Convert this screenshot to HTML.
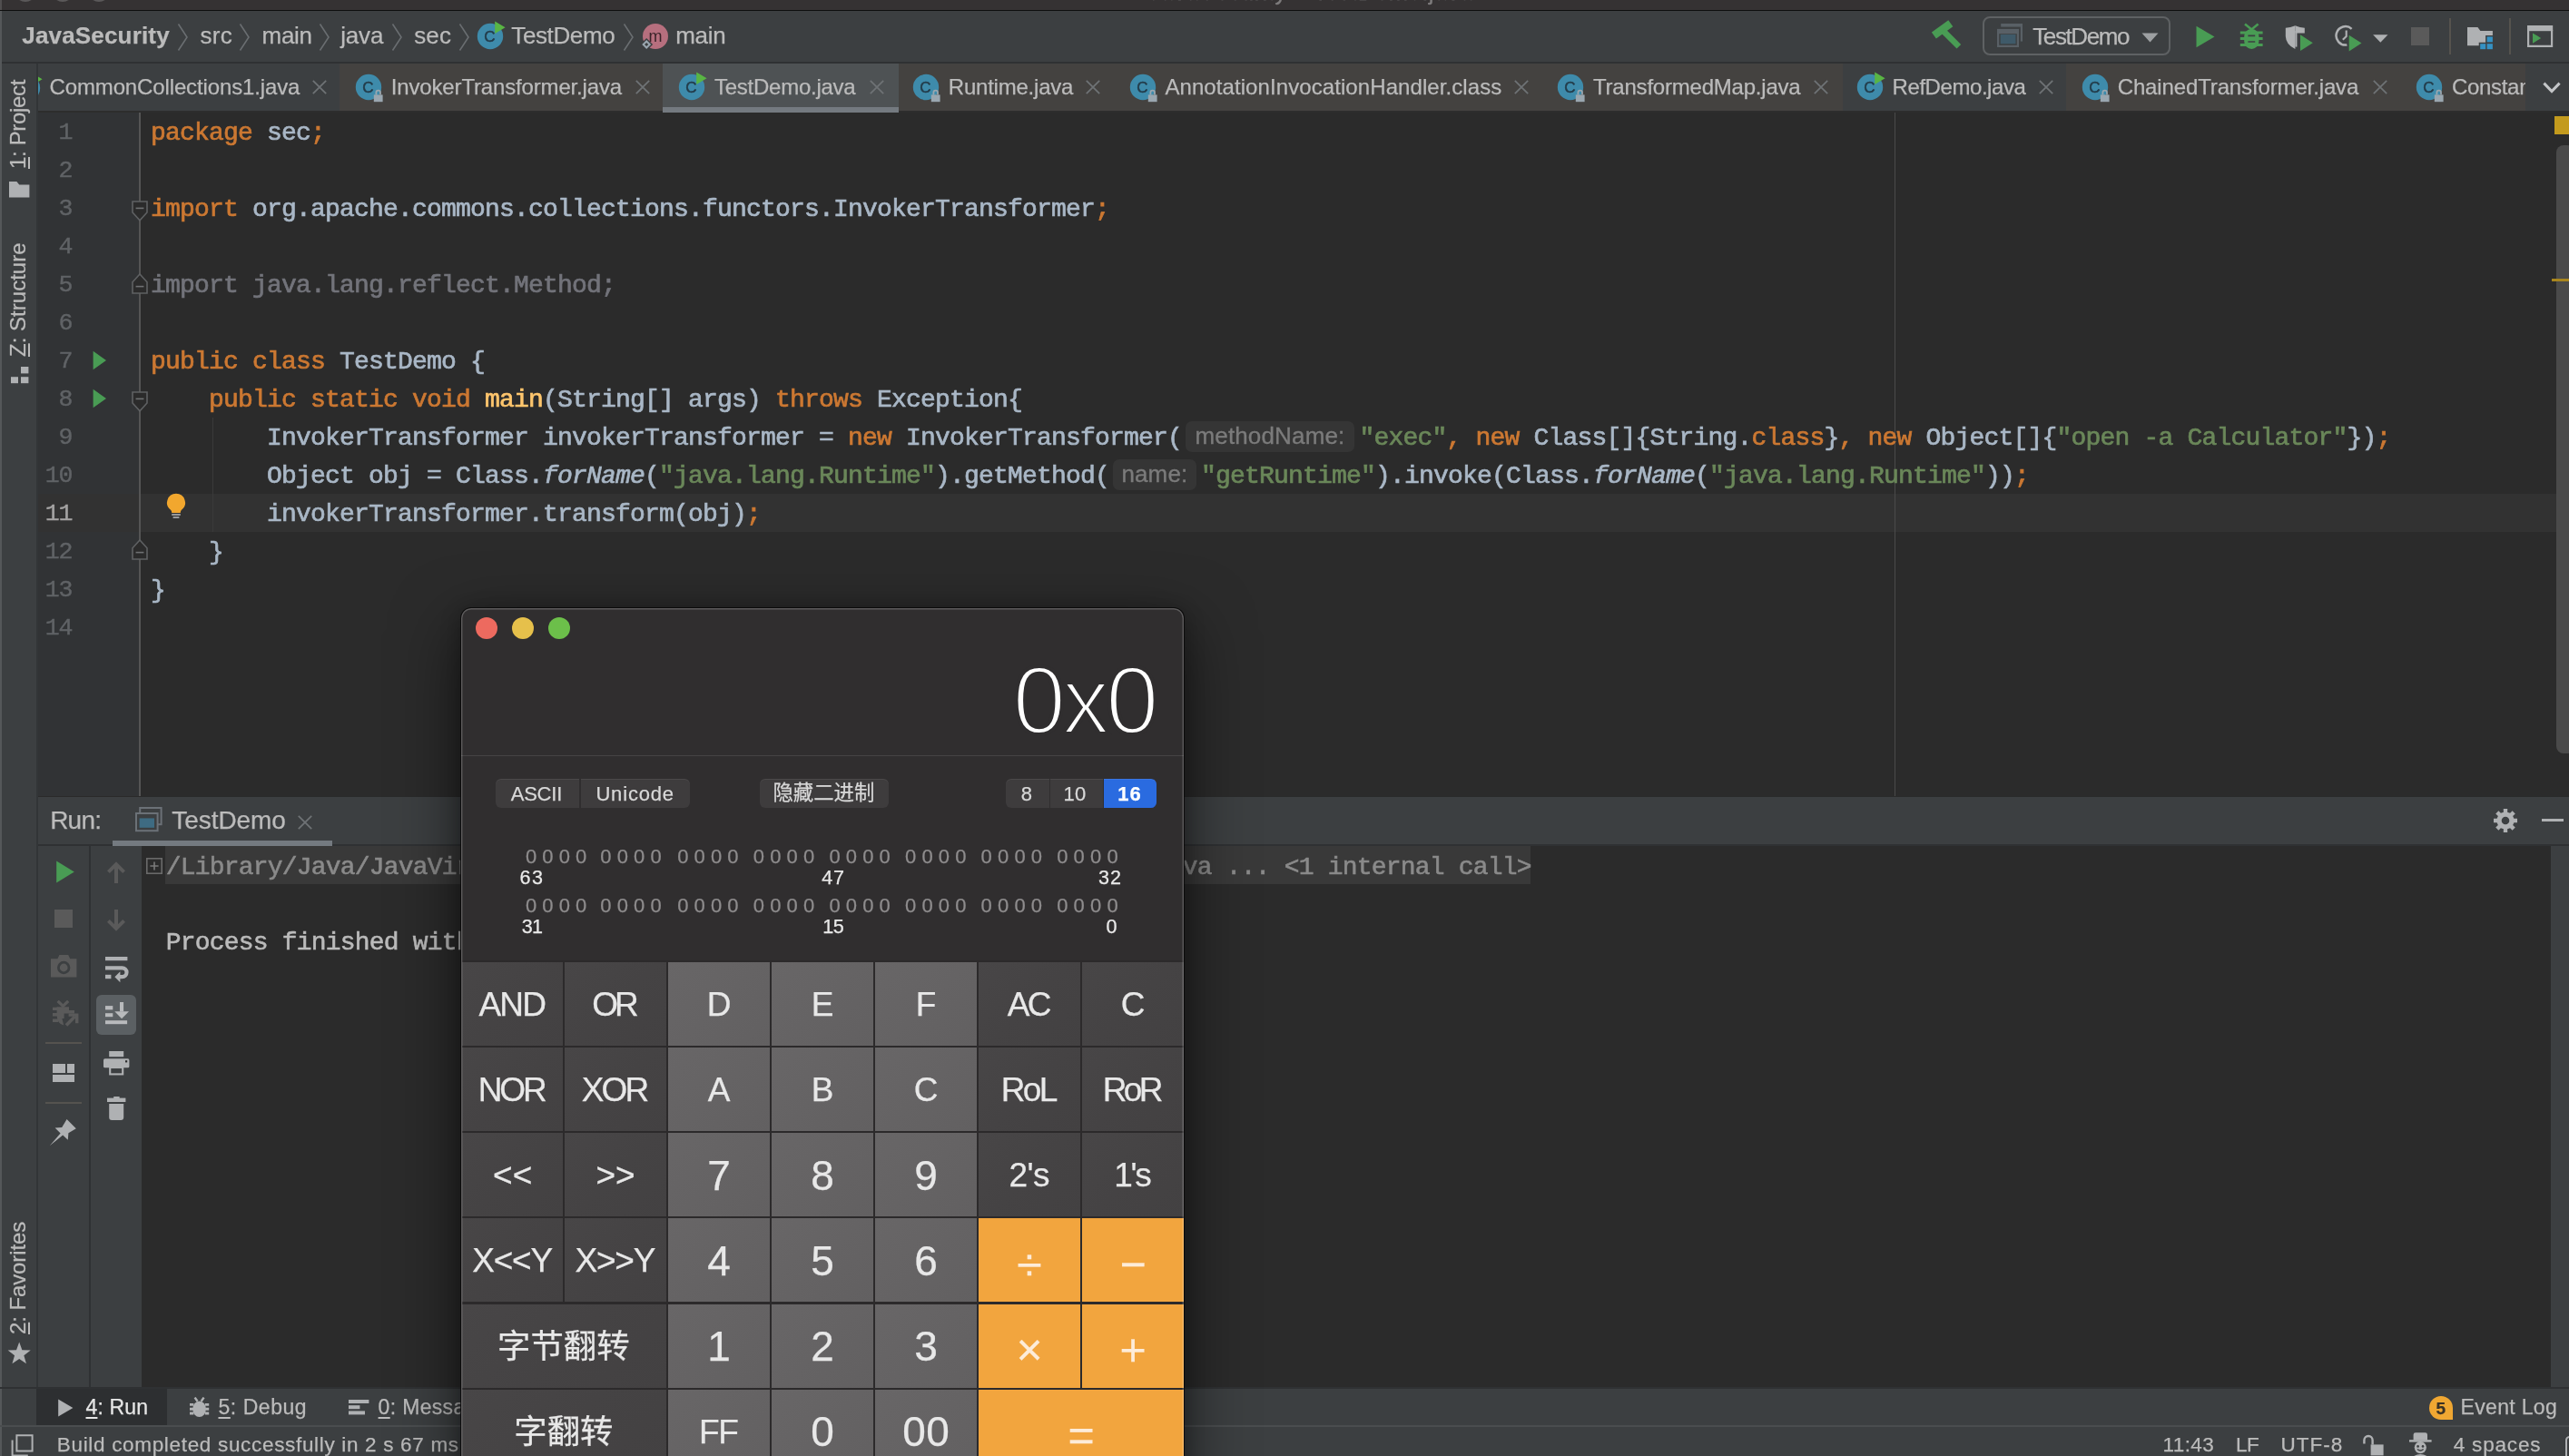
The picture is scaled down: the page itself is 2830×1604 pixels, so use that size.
<!DOCTYPE html>
<html lang="en"><head><meta charset="utf-8"><title>JavaSecurity – TestDemo.java</title>
<style>
html,body{margin:0;padding:0;background:#2b2b2b;}
body{width:2830px;height:1604px;overflow:hidden;position:relative;will-change:transform;font-family:"Liberation Sans",sans-serif;}
.b{position:absolute;display:block;}
.t{position:absolute;white-space:pre;line-height:1;display:block;-webkit-text-stroke:0.25px;}
.mo{font-family:"Liberation Mono",monospace;}
.cl{position:absolute;left:166px;height:42px;line-height:42px;white-space:pre;font-family:"Liberation Mono",monospace;font-size:28px;letter-spacing:-0.803px;color:#a9b7c6;-webkit-text-stroke:0.7px;}
.k{color:#cc7832}.s{color:#6a8759}.m{color:#ffc66d}.g{color:#72737a}.i{font-style:italic}
.hint{display:inline-block;vertical-align:top;height:34px;margin-top:2px;border-radius:7px;background:#353535;color:#7b7b7b;font-family:"Liberation Sans",sans-serif;font-size:26px;line-height:32px;text-align:center;letter-spacing:0.15px;-webkit-text-stroke:0.35px;}
.ln{position:absolute;width:40px;text-align:right;height:42px;line-height:42px;font-family:"Liberation Mono",monospace;font-size:26.6px;letter-spacing:-1.36px;color:#606366;white-space:pre;-webkit-text-stroke:0.4px;}

.cj{font-family:"Liberation Sans","Noto Sans CJK SC",sans-serif;}
#calc{position:absolute;left:508px;top:670px;width:795.8px;height:960px;background:#302e2f;border-radius:11px 11px 0 0;box-shadow:0 0 0 1px rgba(8,8,8,0.85),0 24px 70px 4px rgba(0,0,0,0.5),0 4px 22px rgba(0,0,0,0.3);overflow:hidden;}
#calc:after{content:"";position:absolute;left:0;top:0;right:0;bottom:0;border-radius:11px 11px 0 0;box-shadow:inset 0 0 0 1.4px rgba(255,255,255,0.22);pointer-events:none;}
.key{position:absolute;}
.kl{position:absolute;white-space:pre;line-height:1;text-align:center;color:#e8e8e8;}
</style></head>
<body>
<!-- sec_base -->
<div class="b" style="left:0px;top:0px;width:2830px;height:11px;background:#353233;"></div>
<div class="b" style="left:16px;top:-22.2px;width:24px;height:24px;border-radius:12px;background:#5b595a"></div>
<div class="b" style="left:56.5px;top:-22.2px;width:24px;height:24px;border-radius:12px;background:#5b595a"></div>
<div class="b" style="left:97px;top:-22.2px;width:24px;height:24px;border-radius:12px;background:#5b595a"></div>
<span class="t" style="left:1265.00px;top:-22.41px;font-size:26px;color:#7d7b7c;letter-spacing:0.300px;">JavaSecurity – TestDemo.java</span>
<div class="b" style="left:0px;top:11px;width:2830px;height:1px;background:#0e0e0e;"></div>
<div class="b" style="left:0px;top:12px;width:2830px;height:56px;background:#3c3f41;"></div>
<div class="b" style="left:0px;top:68px;width:2830px;height:2px;background:#2f3133;"></div>
<div class="b" style="left:0px;top:70px;width:40px;height:1458px;background:#3c3f41;"></div>
<div class="b" style="left:0px;top:12px;width:2px;height:1592px;background:#55585a;"></div>
<div class="b" style="left:0px;top:0px;width:2px;height:11px;background:#504e4f;"></div>
<div class="b" style="left:40px;top:70px;width:1.5px;height:1458px;background:#323537;"></div>
<div class="b" style="left:41.5px;top:70px;width:2788.5px;height:52px;background:#3c3f41;"></div>
<div class="b" style="left:41.5px;top:122px;width:2788.5px;height:2px;background:#2d2d2d;"></div>
<div class="b" style="left:41.5px;top:124px;width:111.5px;height:753px;background:#313335;"></div>
<div class="b" style="left:153px;top:124px;width:2px;height:753px;background:#555555;"></div>
<div class="b" style="left:155px;top:124px;width:2675px;height:753px;background:#2b2b2b;"></div>
<!-- sec_nav -->
<span class="t" style="left:24.30px;top:26.29px;font-size:26px;color:#bbbbbb;font-weight:700;letter-spacing:0.171px;">JavaSecurity</span>
<svg class="b" style="left:194.6px;top:25px;" width="13" height="32" viewBox="0 0 13 32"><polyline points="1.5,1.5 11,16 1.5,30.5" fill="none" stroke="#6a6e71" stroke-width="1.6"/></svg>
<span class="t" style="left:220.50px;top:26.29px;font-size:26px;color:#bbbbbb;letter-spacing:0.281px;">src</span>
<svg class="b" style="left:262.7px;top:25px;" width="13" height="32" viewBox="0 0 13 32"><polyline points="1.5,1.5 11,16 1.5,30.5" fill="none" stroke="#6a6e71" stroke-width="1.6"/></svg>
<span class="t" style="left:288.60px;top:26.29px;font-size:26px;color:#bbbbbb;letter-spacing:-0.339px;">main</span>
<svg class="b" style="left:350.9px;top:25px;" width="13" height="32" viewBox="0 0 13 32"><polyline points="1.5,1.5 11,16 1.5,30.5" fill="none" stroke="#6a6e71" stroke-width="1.6"/></svg>
<span class="t" style="left:375.20px;top:26.29px;font-size:26px;color:#bbbbbb;letter-spacing:-0.174px;">java</span>
<svg class="b" style="left:430.7px;top:25px;" width="13" height="32" viewBox="0 0 13 32"><polyline points="1.5,1.5 11,16 1.5,30.5" fill="none" stroke="#6a6e71" stroke-width="1.6"/></svg>
<span class="t" style="left:456.20px;top:26.29px;font-size:26px;color:#bbbbbb;letter-spacing:0.180px;">sec</span>
<svg class="b" style="left:505px;top:25px;" width="13" height="32" viewBox="0 0 13 32"><polyline points="1.5,1.5 11,16 1.5,30.5" fill="none" stroke="#6a6e71" stroke-width="1.6"/></svg>
<svg class="b" style="left:520px;top:20px;" width="40" height="40" viewBox="0 0 40 40"><circle cx="20" cy="20" r="14.2" fill="#3e8bab"/><text x="19.5" y="26" text-anchor="middle" font-family="Liberation Sans, sans-serif" font-size="17" fill="#233c4a" stroke="#233c4a" stroke-width="0.5">C</text><path d="M25.2 3.6 L36.6 10.2 L25.2 17 Z" fill="#59b544"/></svg>
<span class="t" style="left:563.30px;top:26.29px;font-size:26px;color:#bbbbbb;letter-spacing:-0.380px;">TestDemo</span>
<svg class="b" style="left:686px;top:25px;" width="13" height="32" viewBox="0 0 13 32"><polyline points="1.5,1.5 11,16 1.5,30.5" fill="none" stroke="#6a6e71" stroke-width="1.6"/></svg>
<svg class="b" style="left:702px;top:20px;" width="40" height="40" viewBox="0 0 40 40"><circle cx="20" cy="20" r="14" fill="#b66f7e"/><text x="20" y="26.2" text-anchor="middle" font-family="Liberation Sans, sans-serif" font-size="18" fill="#3a2329">m</text><rect x="-4.2" y="-4.2" width="8.4" height="8.4" transform="translate(10.2 29) rotate(45)" fill="#9aa7b0" stroke="#3c3f41" stroke-width="1.4"/><rect x="-1.5" y="-1.5" width="3" height="3" transform="translate(10.2 29) rotate(45)" fill="#3c3f41"/></svg>
<span class="t" style="left:744.30px;top:26.29px;font-size:26px;color:#bbbbbb;letter-spacing:-0.339px;">main</span>
<svg class="b" style="left:2128px;top:22px;" width="36" height="36" viewBox="0 0 36 36"><rect x="-11.4" y="-4.3" width="22.8" height="8.6" transform="translate(11.6 10.4) rotate(-36)" fill="#499c54"/><rect x="-3.3" y="0" width="6.6" height="25" transform="translate(12.2 11.6) rotate(-45)" fill="#499c54"/></svg>
<div class="b" style="left:2184px;top:18px;width:207.4px;height:42.8px;background:transparent;border:2.2px solid #5e6163;border-radius:8px;box-sizing:border-box;"></div>
<svg class="b" style="left:2200px;top:26px;" width="28" height="26" viewBox="0 0 28 26"><rect x="4.2" y="0" width="23.8" height="3.6" fill="#596066"/><rect x="25.8" y="0" width="2.2" height="19.6" fill="#596066"/><rect x="0" y="5.9" width="24" height="20.1" fill="#596066"/><rect x="2.2" y="11.2" width="19.6" height="12.6" fill="#3c3f41"/><rect x="3.7" y="12" width="16.8" height="10.3" fill="#3f5a69"/></svg>
<span class="t" style="left:2239.20px;top:26.59px;font-size:26px;color:#bbbbbb;letter-spacing:-1.380px;">TestDemo</span>
<svg class="b" style="left:2358.5px;top:36px;" width="19" height="11" viewBox="0 0 19 11"><path d="M0.5 0.5 H18.5 L9.5 10.5 Z" fill="#9da0a2"/></svg>
<svg class="b" style="left:2419px;top:27.5px;" width="22" height="25" viewBox="0 0 22 25"><path d="M0.5 0.8 L20.5 12.5 L0.5 24.2 Z" fill="#499c54"/></svg>
<svg class="b" style="left:2466px;top:24px;" width="29" height="32" viewBox="0 0 29 32"><path d="M7 2.4 L14.3 8.4 L21.6 2.4" fill="none" stroke="#499c54" stroke-width="2.6"/><path d="M6.2 16 a8.1 8.1 0 0 1 16.2 0 V21.6 a8.1 8.4 0 0 1 -16.2 0 Z" fill="#499c54"/><path d="M1.8 12 H26.6 M1.8 18.6 H26.6 M1.8 25.4 H26.6" stroke="#499c54" stroke-width="3"/><path d="M10.4 15.3 H18.2 M10.4 22 H18.2" stroke="#3c3f41" stroke-width="1.7"/></svg>
<svg class="b" style="left:2516px;top:26px;" width="33" height="31" viewBox="0 0 33 31"><path d="M12.4 2.2 Q7 4.4 1.8 4.8 V14 Q2.2 23.4 12.4 28 Z" fill="#afb1b3"/><path d="M12.4 2.2 Q17.6 4.4 22.8 4.8 V10.6 H12.4 Z" fill="#afb1b3"/><rect x="12.4" y="8" width="2" height="17.6" fill="#afb1b3"/><path d="M18 12.3 L31.8 21.2 L18 30.1 Z" fill="#499c54"/></svg>
<svg class="b" style="left:2571.2px;top:25.6px;" width="33" height="32" viewBox="0 0 33 32"><path d="M19.6 5.8 A10.2 10.2 0 1 0 14.4 23.4" fill="none" stroke="#afb1b3" stroke-width="2.5"/><path d="M13.7 7.6 V14 L9.8 17.8" fill="none" stroke="#afb1b3" stroke-width="2.1"/><path d="M16.7 12.7 L30.5 21.6 L16.7 30.5 Z" fill="#499c54"/></svg>
<svg class="b" style="left:2613.8px;top:37.6px;" width="17" height="10" viewBox="0 0 17 10"><path d="M0.1 0.3 H16.5 L8.3 8.8 Z" fill="#afb1b3"/></svg>
<div class="b" style="left:2656px;top:30px;width:20px;height:20.2px;background:#5a5a5a;"></div>
<div class="b" style="left:2698.2px;top:20px;width:1.8px;height:40px;background:#56534e;"></div>
<svg class="b" style="left:2718px;top:30px;" width="29" height="25" viewBox="0 0 29 25"><path d="M0 0 H11.4 L14.4 3.9 H27.9 V8.9 H20.1 V16.7 H12.7 V20.2 H0 Z" fill="#afb1b3"/><rect x="21.6" y="10.4" width="6.3" height="6" fill="#3592c4"/><rect x="14.2" y="18.2" width="6" height="6" fill="#3592c4"/><rect x="21.6" y="18.2" width="6.3" height="6" fill="#3592c4"/></svg>
<div class="b" style="left:2764px;top:20px;width:1.8px;height:40px;background:#56534e;"></div>
<svg class="b" style="left:2784px;top:28px;" width="29" height="24.2" viewBox="0 0 29 24.2"><rect x="0" y="0" width="28.2" height="6.2" fill="#afb1b3"/><path d="M1.1 5 V22.9 H27.1 V5" fill="none" stroke="#afb1b3" stroke-width="2.2"/><path d="M6 8.4 L15.2 14.1 L6 19.8 Z" fill="#499c54"/></svg>
<!-- sec_tabs -->
<span class="t" style="left:54.50px;top:84.08px;font-size:24px;color:#bbbbbb;letter-spacing:-0.130px;">CommonCollections1.java</span>
<svg class="b" style="left:343.3px;top:87px;" width="18" height="18" viewBox="0 0 18 18"><path d="M1.8 1.8 L16.2 16.2 M16.2 1.8 L1.8 16.2" stroke="#6e7275" stroke-width="1.8" fill="none"/></svg>
<div class="b" style="left:373.6px;top:70px;width:356.2px;height:52px;background:#444240;"></div>
<svg class="b" style="left:386.0px;top:76px;" width="40" height="40" viewBox="0 0 40 40"><circle cx="20" cy="20" r="14.2" fill="#3e8bab"/><text x="19.5" y="26" text-anchor="middle" font-family="Liberation Sans, sans-serif" font-size="17" fill="#233c4a" stroke="#233c4a" stroke-width="0.5">C</text><rect x="25.4" y="28" width="10.2" height="8.2" fill="#3c3f41" opacity="0"/><rect x="25.8" y="28.4" width="9.8" height="7.8" fill="#9aa7b0"/><path d="M28.4 28.6 v-2.6 a2.3 2.3 0 0 1 4.6 0 v2.6" fill="none" stroke="#9aa7b0" stroke-width="1.8"/></svg>
<span class="t" style="left:430.80px;top:84.08px;font-size:24px;color:#bbbbbb;letter-spacing:-0.160px;">InvokerTransformer.java</span>
<svg class="b" style="left:699px;top:87px;" width="18" height="18" viewBox="0 0 18 18"><path d="M1.8 1.8 L16.2 16.2 M16.2 1.8 L1.8 16.2" stroke="#6e7275" stroke-width="1.8" fill="none"/></svg>
<div class="b" style="left:729.8px;top:70px;width:260.2px;height:52px;background:#4e5254;"></div>
<svg class="b" style="left:742.2px;top:76px;" width="40" height="40" viewBox="0 0 40 40"><circle cx="20" cy="20" r="14.2" fill="#3e8bab"/><text x="19.5" y="26" text-anchor="middle" font-family="Liberation Sans, sans-serif" font-size="17" fill="#233c4a" stroke="#233c4a" stroke-width="0.5">C</text><path d="M25.2 3.6 L36.6 10.2 L25.2 17 Z" fill="#59b544"/></svg>
<span class="t" style="left:787.00px;top:84.08px;font-size:24px;color:#bbbbbb;letter-spacing:-0.257px;">TestDemo.java</span>
<svg class="b" style="left:957px;top:87px;" width="18" height="18" viewBox="0 0 18 18"><path d="M1.8 1.8 L16.2 16.2 M16.2 1.8 L1.8 16.2" stroke="#6e7275" stroke-width="1.8" fill="none"/></svg>
<div class="b" style="left:990px;top:70px;width:238px;height:52px;background:#444240;"></div>
<svg class="b" style="left:1000.0px;top:76px;" width="40" height="40" viewBox="0 0 40 40"><circle cx="20" cy="20" r="14.2" fill="#3e8bab"/><text x="19.5" y="26" text-anchor="middle" font-family="Liberation Sans, sans-serif" font-size="17" fill="#233c4a" stroke="#233c4a" stroke-width="0.5">C</text><rect x="25.4" y="28" width="10.2" height="8.2" fill="#3c3f41" opacity="0"/><rect x="25.8" y="28.4" width="9.8" height="7.8" fill="#9aa7b0"/><path d="M28.4 28.6 v-2.6 a2.3 2.3 0 0 1 4.6 0 v2.6" fill="none" stroke="#9aa7b0" stroke-width="1.8"/></svg>
<span class="t" style="left:1044.80px;top:84.08px;font-size:24px;color:#bbbbbb;letter-spacing:-0.222px;">Runtime.java</span>
<svg class="b" style="left:1195.4px;top:87px;" width="18" height="18" viewBox="0 0 18 18"><path d="M1.8 1.8 L16.2 16.2 M16.2 1.8 L1.8 16.2" stroke="#6e7275" stroke-width="1.8" fill="none"/></svg>
<div class="b" style="left:1228px;top:70px;width:472px;height:52px;background:#444240;"></div>
<svg class="b" style="left:1238.6000000000001px;top:76px;" width="40" height="40" viewBox="0 0 40 40"><circle cx="20" cy="20" r="14.2" fill="#3e8bab"/><text x="19.5" y="26" text-anchor="middle" font-family="Liberation Sans, sans-serif" font-size="17" fill="#233c4a" stroke="#233c4a" stroke-width="0.5">C</text><rect x="25.4" y="28" width="10.2" height="8.2" fill="#3c3f41" opacity="0"/><rect x="25.8" y="28.4" width="9.8" height="7.8" fill="#9aa7b0"/><path d="M28.4 28.6 v-2.6 a2.3 2.3 0 0 1 4.6 0 v2.6" fill="none" stroke="#9aa7b0" stroke-width="1.8"/></svg>
<span class="t" style="left:1283.40px;top:84.08px;font-size:24px;color:#bbbbbb;letter-spacing:0.083px;">AnnotationInvocationHandler.class</span>
<svg class="b" style="left:1667px;top:87px;" width="18" height="18" viewBox="0 0 18 18"><path d="M1.8 1.8 L16.2 16.2 M16.2 1.8 L1.8 16.2" stroke="#6e7275" stroke-width="1.8" fill="none"/></svg>
<div class="b" style="left:1700px;top:70px;width:329.6px;height:52px;background:#444240;"></div>
<svg class="b" style="left:1710.2px;top:76px;" width="40" height="40" viewBox="0 0 40 40"><circle cx="20" cy="20" r="14.2" fill="#3e8bab"/><text x="19.5" y="26" text-anchor="middle" font-family="Liberation Sans, sans-serif" font-size="17" fill="#233c4a" stroke="#233c4a" stroke-width="0.5">C</text><rect x="25.4" y="28" width="10.2" height="8.2" fill="#3c3f41" opacity="0"/><rect x="25.8" y="28.4" width="9.8" height="7.8" fill="#9aa7b0"/><path d="M28.4 28.6 v-2.6 a2.3 2.3 0 0 1 4.6 0 v2.6" fill="none" stroke="#9aa7b0" stroke-width="1.8"/></svg>
<span class="t" style="left:1755.00px;top:84.08px;font-size:24px;color:#bbbbbb;letter-spacing:-0.213px;">TransformedMap.java</span>
<svg class="b" style="left:1997px;top:87px;" width="18" height="18" viewBox="0 0 18 18"><path d="M1.8 1.8 L16.2 16.2 M16.2 1.8 L1.8 16.2" stroke="#6e7275" stroke-width="1.8" fill="none"/></svg>
<svg class="b" style="left:2039.7999999999997px;top:76px;" width="40" height="40" viewBox="0 0 40 40"><circle cx="20" cy="20" r="14.2" fill="#3e8bab"/><text x="19.5" y="26" text-anchor="middle" font-family="Liberation Sans, sans-serif" font-size="17" fill="#233c4a" stroke="#233c4a" stroke-width="0.5">C</text><path d="M25.2 3.6 L36.6 10.2 L25.2 17 Z" fill="#59b544"/></svg>
<span class="t" style="left:2084.60px;top:84.08px;font-size:24px;color:#bbbbbb;letter-spacing:-0.439px;">RefDemo.java</span>
<svg class="b" style="left:2244.7px;top:87px;" width="18" height="18" viewBox="0 0 18 18"><path d="M1.8 1.8 L16.2 16.2 M16.2 1.8 L1.8 16.2" stroke="#6e7275" stroke-width="1.8" fill="none"/></svg>
<div class="b" style="left:2275.8px;top:70px;width:373.2px;height:52px;background:#444240;"></div>
<svg class="b" style="left:2287.8999999999996px;top:76px;" width="40" height="40" viewBox="0 0 40 40"><circle cx="20" cy="20" r="14.2" fill="#3e8bab"/><text x="19.5" y="26" text-anchor="middle" font-family="Liberation Sans, sans-serif" font-size="17" fill="#233c4a" stroke="#233c4a" stroke-width="0.5">C</text><rect x="25.4" y="28" width="10.2" height="8.2" fill="#3c3f41" opacity="0"/><rect x="25.8" y="28.4" width="9.8" height="7.8" fill="#9aa7b0"/><path d="M28.4 28.6 v-2.6 a2.3 2.3 0 0 1 4.6 0 v2.6" fill="none" stroke="#9aa7b0" stroke-width="1.8"/></svg>
<span class="t" style="left:2332.70px;top:84.08px;font-size:24px;color:#bbbbbb;letter-spacing:-0.134px;">ChainedTransformer.java</span>
<svg class="b" style="left:2612.6px;top:87px;" width="18" height="18" viewBox="0 0 18 18"><path d="M1.8 1.8 L16.2 16.2 M16.2 1.8 L1.8 16.2" stroke="#6e7275" stroke-width="1.8" fill="none"/></svg>
<div class="b" style="left:729.8px;top:118px;width:260.2px;height:6px;background:#747a80;"></div>
<div class="b" style="left:41.5px;top:70px;width:6px;height:52px;overflow:hidden"><svg class="b" style="left:-31.7px;top:6.600000000000001px;" width="40" height="40" viewBox="0 0 40 40"><circle cx="20" cy="20" r="14.2" fill="#3e8bab"/><text x="19.5" y="26" text-anchor="middle" font-family="Liberation Sans, sans-serif" font-size="17" fill="#233c4a" stroke="#233c4a" stroke-width="0.5">C</text><path d="M25.2 3.6 L36.6 10.2 L25.2 17 Z" fill="#59b544"/></svg></div>
<div class="b" style="left:2649px;top:70px;width:132.6px;height:52px;overflow:hidden;background:#444240"><svg class="b" style="left:7px;top:6px;" width="40" height="40" viewBox="0 0 40 40"><circle cx="20" cy="20" r="14.2" fill="#3e8bab"/><text x="19.5" y="26" text-anchor="middle" font-family="Liberation Sans, sans-serif" font-size="17" fill="#233c4a" stroke="#233c4a" stroke-width="0.5">C</text><rect x="25.4" y="28" width="10.2" height="8.2" fill="#3c3f41" opacity="0"/><rect x="25.8" y="28.4" width="9.8" height="7.8" fill="#9aa7b0"/><path d="M28.4 28.6 v-2.6 a2.3 2.3 0 0 1 4.6 0 v2.6" fill="none" stroke="#9aa7b0" stroke-width="1.8"/></svg><span class="t" style="left:51.90px;top:14.08px;font-size:24px;color:#bbbbbb;letter-spacing:-0.300px;">ConstantTransformer.java</span></div>
<svg class="b" style="left:2800.5px;top:89.5px;" width="20" height="13" viewBox="0 0 20 13"><polyline points="1.4,1.6 10,10.6 18.6,1.6" fill="none" stroke="#c4c6c8" stroke-width="3"/></svg>
<!-- sec_editor -->
<div class="b" style="left:155px;top:544px;width:2661px;height:42px;background:#323232;"></div>
<div class="b" style="left:41.5px;top:544px;width:111.5px;height:42px;background:#323232;"></div>
<div class="b" style="left:2086.6px;top:124px;width:1.4px;height:753px;background:#4a4a4a;"></div>
<div class="b" style="left:234px;top:460px;width:1.4px;height:126px;background:#3a3a3a;"></div>
<div class="ln" style="left:39px;top:125.2px;color:#606366">1</div>
<div class="cl" style="top:125.9px"><span class="k">package</span> sec<span class="k">;</span></div>
<div class="ln" style="left:39px;top:167.2px;color:#606366">2</div>
<div class="ln" style="left:39px;top:209.2px;color:#606366">3</div>
<div class="cl" style="top:209.9px"><span class="k">import</span> org.apache.commons.collections.functors.InvokerTransformer<span class="k">;</span></div>
<div class="ln" style="left:39px;top:251.2px;color:#606366">4</div>
<div class="ln" style="left:39px;top:293.2px;color:#606366">5</div>
<div class="cl" style="top:293.9px"><span class="g">import java.lang.reflect.Method;</span></div>
<div class="ln" style="left:39px;top:335.2px;color:#606366">6</div>
<div class="ln" style="left:39px;top:377.2px;color:#606366">7</div>
<div class="cl" style="top:377.9px"><span class="k">public class</span> TestDemo {</div>
<div class="ln" style="left:39px;top:419.2px;color:#606366">8</div>
<div class="cl" style="top:419.9px">    <span class="k">public static void</span> <span class="m">main</span>(String[] args) <span class="k">throws</span> Exception{</div>
<div class="ln" style="left:39px;top:461.2px;color:#606366">9</div>
<div class="cl" style="top:461.9px">        InvokerTransformer invokerTransformer = <span class="k">new</span> InvokerTransformer(<span class="hint" style="margin-left:4.3px;width:185.3px;margin-right:5.9px">methodName:</span><span class="s">&quot;exec&quot;</span><span class="k">,</span> <span class="k">new</span> Class[]{String.<span class="k">class</span>}<span class="k">,</span> <span class="k">new</span> Object[]{<span class="s">&quot;open -a Calculator&quot;</span>})<span class="k">;</span></div>
<div class="ln" style="left:39px;top:503.2px;color:#606366">10</div>
<div class="cl" style="top:503.9px">        Object obj = Class.<span class="i">forName</span>(<span class="s">&quot;java.lang.Runtime&quot;</span>).getMethod(<span class="hint" style="margin-left:3.8px;width:92.2px;margin-right:5px">name:</span><span class="s">&quot;getRuntime&quot;</span>).invoke(Class.<span class="i">forName</span>(<span class="s">&quot;java.lang.Runtime&quot;</span>))<span class="k">;</span></div>
<div class="ln" style="left:39px;top:545.2px;color:#a4a3a3">11</div>
<div class="cl" style="top:545.9px">        invokerTransformer.transform(obj)<span class="k">;</span></div>
<div class="ln" style="left:39px;top:587.2px;color:#606366">12</div>
<div class="cl" style="top:587.9px">    }</div>
<div class="ln" style="left:39px;top:629.2px;color:#606366">13</div>
<div class="cl" style="top:629.9px">}</div>
<div class="ln" style="left:39px;top:671.2px;color:#606366">14</div>
<svg class="b" style="left:145px;top:220.6px;" width="18" height="23" viewBox="0 0 18 23"><path d="M1 1 H17 V13 L9 21.8 L1 13 Z" fill="#2b2b2b" stroke="#5f6163" stroke-width="1.6"/><path d="M4.6 8.4 H13.4" stroke="#6f7173" stroke-width="1.6"/></svg>
<svg class="b" style="left:145px;top:301px;" width="18" height="23" viewBox="0 0 18 23"><path d="M1 22 H17 V9.8 L9 1 L1 9.8 Z" fill="#2b2b2b" stroke="#5f6163" stroke-width="1.6"/><path d="M4.6 14.6 H13.4" stroke="#6f7173" stroke-width="1.6"/></svg>
<svg class="b" style="left:145px;top:430.6px;" width="18" height="23" viewBox="0 0 18 23"><path d="M1 1 H17 V13 L9 21.8 L1 13 Z" fill="#2b2b2b" stroke="#5f6163" stroke-width="1.6"/><path d="M4.6 8.4 H13.4" stroke="#6f7173" stroke-width="1.6"/></svg>
<svg class="b" style="left:145px;top:594px;" width="18" height="23" viewBox="0 0 18 23"><path d="M1 22 H17 V9.8 L9 1 L1 9.8 Z" fill="#2b2b2b" stroke="#5f6163" stroke-width="1.6"/><path d="M4.6 14.6 H13.4" stroke="#6f7173" stroke-width="1.6"/></svg>
<svg class="b" style="left:101.6px;top:386.4px;" width="16" height="22" viewBox="0 0 16 22"><path d="M0.6 0.8 L15 11 L0.6 21.2 Z" fill="#499c54"/></svg>
<svg class="b" style="left:101.6px;top:428.4px;" width="16" height="22" viewBox="0 0 16 22"><path d="M0.6 0.8 L15 11 L0.6 21.2 Z" fill="#499c54"/></svg>
<svg class="b" style="left:183px;top:543.4px;" width="22" height="29" viewBox="0 0 22 29"><path d="M11 0.8 a10 10 0 0 1 6 18 q-1.2 1 -1.2 2.6 v0.6 h-9.6 v-0.6 q0 -1.6 -1.2 -2.6 a10 10 0 0 1 6 -18 Z" fill="#f2a72e"/><path d="M6.2 24 H15.8 M7.6 27 H14.4" stroke="#b9bbbd" stroke-width="1.7"/></svg>
<div class="b" style="left:2814px;top:128px;width:16px;height:20px;background:#c39a1d;"></div>
<div class="b" style="left:2816px;top:160px;width:20px;height:670px;background:#4a4a4a;border-radius:8px;"></div>
<div class="b" style="left:2810.6px;top:307px;width:19.4px;height:2.6px;background:#a8851f;"></div>
<!-- sec_run -->
<div class="b" style="left:41.5px;top:876.5px;width:2788.5px;height:1.8px;background:#2a2a2a;"></div>
<div class="b" style="left:41.5px;top:878.3px;width:2788.5px;height:51.7px;background:#3c3f41;"></div>
<div class="b" style="left:41.5px;top:930px;width:2788.5px;height:2px;background:#2f3133;"></div>
<span class="t" style="left:55.20px;top:890.00px;font-size:28px;color:#bbbbbb;letter-spacing:-0.787px;">Run:</span>
<svg class="b" style="left:148.8px;top:888.9px;" width="30" height="28" viewBox="0 0 30 28"><rect x="5.2" y="1" width="23.4" height="18.2" fill="none" stroke="#6b7177" stroke-width="2"/><rect x="1" y="7" width="23.6" height="19.2" fill="#3c3f41" stroke="#6b7177" stroke-width="2"/><rect x="4.6" y="12.4" width="16.4" height="10.4" fill="#3e6b82"/></svg>
<span class="t" style="left:189.30px;top:890.00px;font-size:28px;color:#bbbbbb;letter-spacing:-0.068px;">TestDemo</span>
<svg class="b" style="left:327px;top:897px;" width="18" height="18" viewBox="0 0 18 18"><path d="M1.8 1.8 L16.2 16.2 M16.2 1.8 L1.8 16.2" stroke="#6e7275" stroke-width="1.8" fill="none"/></svg>
<div class="b" style="left:124px;top:926px;width:242.2px;height:6px;background:#747a80;"></div>
<svg class="b" style="left:2746.4px;top:890.4px;" width="28" height="28" viewBox="0 0 28 28"><polygon points="11.77,0.99 16.23,0.99 16.14,4.64 19.10,5.87 21.62,3.22 24.78,6.38 22.13,8.90 23.36,11.86 27.01,11.77 27.01,16.23 23.36,16.14 22.13,19.10 24.78,21.62 21.62,24.78 19.10,22.13 16.14,23.36 16.23,27.01 11.77,27.01 11.86,23.36 8.90,22.13 6.38,24.78 3.22,21.62 5.87,19.10 4.64,16.14 0.99,16.23 0.99,11.77 4.64,11.86 5.87,8.90 3.22,6.38 6.38,3.22 8.90,5.87 11.86,4.64" fill="#afb1b3"/><circle cx="14" cy="14" r="4.3" fill="#3c3f41"/></svg>
<div class="b" style="left:2800.4px;top:902.2px;width:24px;height:3px;background:#afb1b3;"></div>
<div class="b" style="left:41.5px;top:932px;width:56.3px;height:596px;background:#3c3f41;"></div>
<div class="b" style="left:97.8px;top:932px;width:2.2px;height:596px;background:#2f3133;"></div>
<div class="b" style="left:100px;top:932px;width:56px;height:596px;background:#3c3f41;"></div>
<div class="b" style="left:156px;top:932px;width:2654px;height:596px;background:#2b2b2b;"></div>
<div class="b" style="left:2809.6px;top:932px;width:20.4px;height:596px;background:#3c3f41;"></div>
<svg class="b" style="left:62px;top:947.6px;" width="20" height="25" viewBox="0 0 20 25"><path d="M0.2 0.4 L19.8 12.4 L0.2 24.4 Z" fill="#499c54"/></svg>
<div class="b" style="left:60px;top:1002px;width:20.2px;height:20px;background:#5a5a5a;"></div>
<svg class="b" style="left:55.8px;top:1051.6px;" width="29" height="25" viewBox="0 0 29 25"><path d="M0 4.2 H7.4 L9.4 0 H19.2 L21.2 4.2 H28.4 V24.4 H0 Z" fill="#5a5a5a"/><circle cx="14.2" cy="14" r="7.2" fill="#3c3f41"/><circle cx="14.2" cy="14" r="4.4" fill="#5a5a5a"/></svg>
<svg class="b" style="left:57.9px;top:1102px;" width="29" height="30" viewBox="0 0 29 30"><path d="M5.6 0.8 L11.4 6.4 L17.2 0.8" fill="none" stroke="#5a5a5a" stroke-width="3.2"/><path d="M4.6 7.2 H18 V11 H24 V14.4 H12.6 V20 H10.4 L12.2 27.6 Q4.6 25.6 4.6 16 Z" fill="#5a5a5a"/><path d="M0 9.4 H6 M0 15.8 H6 M0 22.2 H6" stroke="#5a5a5a" stroke-width="3.4"/><path d="M15 27.4 L24.6 17.8" stroke="#5a5a5a" stroke-width="3.6"/><path d="M17.6 14.4 H28.4 V25.2 L25 25.2 V17.8 H17.6 Z" fill="#5a5a5a"/></svg>
<div class="b" style="left:50px;top:1147.8px;width:40px;height:2.2px;background:#55534f;"></div>
<div class="b" style="left:57.9px;top:1171.8px;width:13.7px;height:10px;background:#afb1b3;"></div>
<div class="b" style="left:74px;top:1171.8px;width:8px;height:10px;background:#afb1b3;"></div>
<div class="b" style="left:57.9px;top:1184.2px;width:24.1px;height:7.8px;background:#afb1b3;"></div>
<div class="b" style="left:50px;top:1214px;width:40px;height:2.2px;background:#55534f;"></div>
<svg class="b" style="left:55.4px;top:1233.4px;" width="29" height="29" viewBox="0 0 29 29"><path d="M0 29 L11.6 15.4 L5.6 9.4 L13.2 9 L18.6 0 L28.8 10.2 L20.4 15.2 L19.8 22.8 L14.2 17.6 Z" fill="#afb1b3"/></svg>
<svg class="b" style="left:118px;top:948.6px;" width="20" height="26" viewBox="0 0 20 26"><path d="M10 24 V3 M1.4 11.6 L10 3 L18.6 11.6" fill="none" stroke="#5a5a5a" stroke-width="4"/></svg>
<svg class="b" style="left:118px;top:1002px;" width="20" height="26" viewBox="0 0 20 26"><path d="M10 0 V21 M1.4 12.4 L10 21 L18.6 12.4" fill="none" stroke="#5a5a5a" stroke-width="4"/></svg>
<svg class="b" style="left:115.6px;top:1053.8px;" width="28" height="29" viewBox="0 0 28 29"><rect x="0" y="0" width="24.4" height="4.2" fill="#afb1b3"/><rect x="0" y="19.8" width="6.4" height="4.4" fill="#afb1b3"/><path d="M0 12.3 H18.6 a4.9 4.9 0 0 1 0 9.8 H15.4" fill="none" stroke="#afb1b3" stroke-width="4.2"/><path d="M10.4 22.2 L16.4 16.2 V28.2 Z" fill="#afb1b3"/></svg>
<div class="b" style="left:106.1px;top:1095.9px;width:43.9px;height:44.1px;background:#5b6063;border-radius:6px;"></div>
<svg class="b" style="left:116px;top:1103.8px;" width="27" height="25" viewBox="0 0 27 25"><rect x="0" y="4.1" width="8.3" height="4.3" fill="#b8babc"/><rect x="0" y="12.2" width="8.3" height="4" fill="#b8babc"/><rect x="0" y="20.2" width="24.1" height="4" fill="#b8babc"/><rect x="16" y="0" width="4.1" height="10.4" fill="#b8babc"/><path d="M10.3 10.2 H26 L18.1 18.2 Z" fill="#b8babc"/></svg>
<svg class="b" style="left:113.9px;top:1157.7px;" width="29" height="27" viewBox="0 0 29 27"><rect x="6.2" y="0" width="16" height="6.2" fill="#afb1b3"/><rect x="0" y="8.3" width="28.4" height="10" rx="1.6" fill="#afb1b3"/><rect x="7.2" y="18" width="14" height="7.4" fill="none" stroke="#afb1b3" stroke-width="2.1"/><rect x="24" y="10.2" width="2.2" height="2.2" fill="#2b2b2b"/></svg>
<svg class="b" style="left:117.8px;top:1208px;" width="21" height="27" viewBox="0 0 21 27"><rect x="7.2" y="0" width="6.4" height="2.6" fill="#afb1b3"/><rect x="0" y="1.6" width="20.4" height="4.4" fill="#afb1b3"/><path d="M2.2 8 H18.2 V23 a3 3 0 0 1 -3 3 H5.2 a3 3 0 0 1 -3 -3 Z" fill="#afb1b3"/></svg>
<div class="b" style="left:182px;top:932px;width:1504px;height:42px;background:#393939;"></div>
<svg class="b" style="left:161.2px;top:945.2px;" width="18" height="18" viewBox="0 0 18 18"><rect x="0.8" y="0.8" width="16.4" height="16.4" fill="none" stroke="#6a6a6a" stroke-width="1.6"/><path d="M4.4 9 H13.6 M9 4.4 V13.6" stroke="#7a7a7a" stroke-width="1.6"/></svg>
<span class="t mo" style="left:182.80px;top:941.95px;font-size:28px;color:#8a8a8a;letter-spacing:-0.803px;-webkit-text-stroke:0.6px #8a8a8a;">/Library/Java/JavaVirtualMachines/jdk1.8.0_66.jdk/Contents/Home/bin/java ... &lt;1 internal call&gt;</span>
<span class="t mo" style="left:182.80px;top:1025.15px;font-size:28px;color:#bbbbbb;letter-spacing:-0.803px;-webkit-text-stroke:0.6px #bbbbbb;">Process finished with exit code 0</span>
<!-- sec_bottom -->
<span class="t" style="left:8.12px;top:185.60px;font-size:24px;color:#bbbbbb;letter-spacing:-0.338px;transform-origin:0 0;transform:translate(20.32px,0) rotate(-90deg) translate(0,-20.32px);"><span style="text-decoration:underline;text-decoration-thickness:1.6px;text-underline-offset:3px">1</span>: Project</span>
<svg class="b" style="left:9.7px;top:200.4px;" width="23" height="18" viewBox="0 0 23 18"><path d="M0 0 H8.4 L11.2 3.4 H22.4 V17.6 H0 Z" fill="#afb1b3"/></svg>
<span class="t" style="left:8.12px;top:392.80px;font-size:24px;color:#bbbbbb;letter-spacing:0.019px;transform-origin:0 0;transform:translate(20.32px,0) rotate(-90deg) translate(0,-20.32px);"><span style="text-decoration:underline;text-decoration-thickness:1.6px;text-underline-offset:3px">Z</span>: Structure</span>
<svg class="b" style="left:11.6px;top:404px;" width="20" height="19" viewBox="0 0 20 19"><rect x="0" y="11.2" width="8" height="7" fill="#afb1b3"/><rect x="11" y="11.2" width="8.4" height="7" fill="#afb1b3"/><rect x="11" y="0" width="8.4" height="7.4" fill="#afb1b3"/></svg>
<span class="t" style="left:8.12px;top:1469.80px;font-size:24px;color:#bbbbbb;letter-spacing:-0.099px;transform-origin:0 0;transform:translate(20.32px,0) rotate(-90deg) translate(0,-20.32px);"><span style="text-decoration:underline;text-decoration-thickness:1.6px;text-underline-offset:3px">2</span>: Favorites</span>
<svg class="b" style="left:7.9px;top:1477.6px;" width="27" height="27" viewBox="0 0 27 27"><polygon points="13.20,0.40 16.37,9.23 25.75,9.52 18.34,15.27 20.96,24.28 13.20,19.00 5.44,24.28 8.06,15.27 0.65,9.52 10.03,9.23" fill="#afb1b3"/></svg>
<div class="b" style="left:0px;top:1528px;width:2830px;height:2px;background:#2f3133;"></div>
<div class="b" style="left:2px;top:1530px;width:2828px;height:40px;background:#3c3f41;"></div>
<div class="b" style="left:40px;top:1530px;width:143.8px;height:40px;background:#2d2f31;"></div>
<svg class="b" style="left:63.6px;top:1540.8px;" width="17" height="20" viewBox="0 0 17 20"><path d="M0.2 0.4 L16.4 10 L0.2 19.6 Z" fill="#afb1b3"/></svg>
<span class="t" style="left:94.50px;top:1538.93px;font-size:23px;color:#e6e6e6;letter-spacing:0.139px;"><span style="text-decoration:underline;text-decoration-thickness:1.6px;text-underline-offset:3px">4</span>: Run</span>
<svg class="b" style="left:208.6px;top:1539.4px;" width="22" height="22" viewBox="0 0 22 22"><ellipse cx="10.6" cy="13.2" rx="7.3" ry="8.8" fill="#afb1b3"/><path d="M5.6 0.6 L8.6 4.8 M15.6 0.6 L12.6 4.8" stroke="#afb1b3" stroke-width="2.4"/><path d="M0 8.4 H4.4 M0 13.2 H4 M0 18 H4.4 M16.8 8.4 H21.2 M17.2 13.2 H21.2 M16.8 18 H21.2" stroke="#afb1b3" stroke-width="2.9"/></svg>
<span class="t" style="left:240.50px;top:1538.93px;font-size:23px;color:#bbbbbb;letter-spacing:0.531px;"><span style="text-decoration:underline;text-decoration-thickness:1.6px;text-underline-offset:3px">5</span>: Debug</span>
<svg class="b" style="left:383.6px;top:1542px;" width="23" height="17" viewBox="0 0 23 17"><rect x="0" y="0" width="22.4" height="4" fill="#afb1b3"/><rect x="0" y="6.2" width="12.4" height="4" fill="#afb1b3"/><rect x="0" y="12.4" width="18" height="4" fill="#afb1b3"/></svg>
<span class="t" style="left:416.60px;top:1538.93px;font-size:23px;color:#bbbbbb;letter-spacing:0.327px;"><span style="text-decoration:underline;text-decoration-thickness:1.6px;text-underline-offset:3px">0</span>: Messages</span>
<div class="b" style="left:2676px;top:1538px;width:26px;height:26px;border-radius:13px 13px 0 13px;background:#f0a732"></div>
<span class="t" style="left:2683.60px;top:1542.12px;font-size:19px;color:#3a3226;font-weight:700;">5</span>
<span class="t" style="left:2710.60px;top:1539.13px;font-size:23px;color:#bbbbbb;letter-spacing:0.313px;">Event Log</span>
<div class="b" style="left:0px;top:1570px;width:2830px;height:2px;background:#4a4d4f;"></div>
<div class="b" style="left:2px;top:1572px;width:2828px;height:32px;background:#3c3f41;"></div>
<svg class="b" style="left:11.6px;top:1579.6px;" width="26" height="26" viewBox="0 0 26 26"><path d="M6.4 1.2 H23.6 V18.4 H6.4 Z" fill="none" stroke="#afb1b3" stroke-width="2"/><path d="M1.6 6.4 V23.6 H18.8" fill="none" stroke="#afb1b3" stroke-width="2"/></svg>
<span class="t" style="left:62.80px;top:1580.75px;font-size:22.5px;color:#bbbbbb;letter-spacing:0.677px;">Build completed successfully in 2 s 67 ms (moments ago)</span>
<span class="t" style="left:2382.50px;top:1581.05px;font-size:22.5px;color:#bbbbbb;letter-spacing:0.393px;">11:43</span>
<span class="t" style="left:2463.00px;top:1581.05px;font-size:22.5px;color:#bbbbbb;letter-spacing:-0.429px;">LF</span>
<span class="t" style="left:2512.50px;top:1581.05px;font-size:22.5px;color:#bbbbbb;letter-spacing:1.011px;">UTF-8</span>
<svg class="b" style="left:2603.4px;top:1578px;" width="24" height="26" viewBox="0 0 24 26"><rect x="8.6" y="13.4" width="14" height="12" fill="#afb1b3"/><path d="M1.4 12.4 V8.6 a4.6 4.6 0 0 1 9.2 0 V13.6" fill="none" stroke="#afb1b3" stroke-width="2.4"/></svg>
<svg class="b" style="left:2654px;top:1578px;" width="25" height="27" viewBox="0 0 25 27"><rect x="0" y="8.2" width="24.6" height="2.4" fill="#afb1b3"/><path d="M4.6 8.4 V2.6 a2.4 2.4 0 0 1 2.4 -2.4 h10.6 a2.4 2.4 0 0 1 2.4 2.4 V8.4 Z" fill="#afb1b3"/><circle cx="12.3" cy="16.6" r="6.6" fill="#afb1b3"/><circle cx="9.6" cy="15.4" r="1.3" fill="#3c3f41"/><circle cx="15" cy="15.4" r="1.3" fill="#3c3f41"/><path d="M9 18.6 q3.3 3 6.6 0" fill="none" stroke="#3c3f41" stroke-width="1.4"/><path d="M3.6 27 q8.7 -6 17.4 0 Z" fill="#afb1b3"/></svg>
<span class="t" style="left:2702.70px;top:1581.05px;font-size:22.5px;color:#bbbbbb;letter-spacing:0.818px;">4 spaces</span>
<div class="b" style="left:2825.6px;top:1582px;width:5px;height:22px;background:transparent;border:2px solid #afb1b3;border-radius:6px;"></div>
<!-- sec_calc -->
<div id="calc">
<div class="b" style="left:16px;top:10px;width:24px;height:24px;border-radius:12px;background:#ed6a5f"></div>
<div class="b" style="left:56px;top:10px;width:24px;height:24px;border-radius:12px;background:#e6c04b"></div>
<div class="b" style="left:96px;top:10px;width:24px;height:24px;border-radius:12px;background:#6cbf4a"></div>
<div class="t" style="left:574px;top:48.700000000000045px;width:190px;text-align:right;font-size:105.4px;letter-spacing:-4.5px;color:#fff;-webkit-text-stroke:3.8px #302e2f;">0x0</div>
<div class="b" style="left:0px;top:162px;width:800px;height:1.3px;background:#464445;"></div>
<div class="b" style="left:38.0px;top:188.2px;width:92.2px;height:31.6px;background:#3e3c3d;border-radius:6px 0 0 6px;box-shadow:inset 0 1px 0 rgba(255,255,255,0.07);"></div>
<div class="b" style="left:131.8px;top:188.2px;width:120.2px;height:31.6px;background:#3e3c3d;border-radius:0 6px 6px 0;box-shadow:inset 0 1px 0 rgba(255,255,255,0.07);"></div>
<div class="b" style="left:329.0px;top:188.2px;width:141.6px;height:31.6px;background:#3e3c3d;border-radius:6px;box-shadow:inset 0 1px 0 rgba(255,255,255,0.07);"></div>
<div class="b" style="left:599.8px;top:188.2px;width:48.2px;height:31.6px;background:#3e3c3d;border-radius:6px 0 0 6px;box-shadow:inset 0 1px 0 rgba(255,255,255,0.07);"></div>
<div class="b" style="left:649.4px;top:188.2px;width:58.0px;height:31.6px;background:#3e3c3d;border-radius:0;box-shadow:inset 0 1px 0 rgba(255,255,255,0.07);"></div>
<div class="b" style="left:708.0px;top:188.2px;width:58.4px;height:31.6px;background:#2a6be0;border-radius:0 6px 6px 0;box-shadow:inset 0 1px 0 rgba(255,255,255,0.07);"></div>
<span class="t" style="left:54.70px;top:194.18px;font-size:22px;color:#d8d8d8;letter-spacing:-0.212px;">ASCII</span>
<span class="t" style="left:148.40px;top:194.18px;font-size:22px;color:#d8d8d8;letter-spacing:0.826px;">Unicode</span>
<span class="t cj" style="left:343.4px;top:193.4px;font-size:22.4px;color:#d8d8d8;">隐藏二进制</span>
<span class="t" style="left:616.80px;top:194.18px;font-size:22px;color:#d8d8d8;">8</span>
<span class="t" style="left:663.40px;top:194.18px;font-size:22px;color:#d8d8d8;letter-spacing:0.464px;">10</span>
<span class="t" style="left:723.20px;top:194.18px;font-size:22px;color:#ffffff;font-weight:700;letter-spacing:0.964px;">16</span>
<span class="t" style="left:70.90px;top:262.68px;font-size:22px;color:#8e8c8d;letter-spacing:6.150px;">0000</span>
<span class="t" style="left:153.32px;top:262.68px;font-size:22px;color:#8e8c8d;letter-spacing:6.150px;">0000</span>
<span class="t" style="left:238.14px;top:262.68px;font-size:22px;color:#8e8c8d;letter-spacing:6.150px;">0000</span>
<span class="t" style="left:321.76px;top:262.68px;font-size:22px;color:#8e8c8d;letter-spacing:6.150px;">0000</span>
<span class="t" style="left:405.38px;top:262.68px;font-size:22px;color:#8e8c8d;letter-spacing:6.150px;">0000</span>
<span class="t" style="left:489.00px;top:262.68px;font-size:22px;color:#8e8c8d;letter-spacing:6.150px;">0000</span>
<span class="t" style="left:572.62px;top:262.68px;font-size:22px;color:#8e8c8d;letter-spacing:6.150px;">0000</span>
<span class="t" style="left:656.24px;top:262.68px;font-size:22px;color:#8e8c8d;letter-spacing:6.150px;">0000</span>
<span class="t" style="left:70.90px;top:316.98px;font-size:22px;color:#8e8c8d;letter-spacing:6.150px;">0000</span>
<span class="t" style="left:153.32px;top:316.98px;font-size:22px;color:#8e8c8d;letter-spacing:6.150px;">0000</span>
<span class="t" style="left:238.14px;top:316.98px;font-size:22px;color:#8e8c8d;letter-spacing:6.150px;">0000</span>
<span class="t" style="left:321.76px;top:316.98px;font-size:22px;color:#8e8c8d;letter-spacing:6.150px;">0000</span>
<span class="t" style="left:405.38px;top:316.98px;font-size:22px;color:#8e8c8d;letter-spacing:6.150px;">0000</span>
<span class="t" style="left:489.00px;top:316.98px;font-size:22px;color:#8e8c8d;letter-spacing:6.150px;">0000</span>
<span class="t" style="left:572.62px;top:316.98px;font-size:22px;color:#8e8c8d;letter-spacing:6.150px;">0000</span>
<span class="t" style="left:656.24px;top:316.98px;font-size:22px;color:#8e8c8d;letter-spacing:6.150px;">0000</span>
<span class="t" style="left:64.40px;top:285.52px;font-size:21.6px;color:#e9e9e9;letter-spacing:1.587px;">63</span>
<span class="t" style="left:397.20px;top:285.52px;font-size:21.6px;color:#e9e9e9;letter-spacing:0.687px;">47</span>
<span class="t" style="left:701.90px;top:285.52px;font-size:21.6px;color:#e9e9e9;letter-spacing:1.187px;">32</span>
<span class="t" style="left:66.70px;top:339.72px;font-size:21.6px;color:#e9e9e9;letter-spacing:-0.763px;">31</span>
<span class="t" style="left:398.20px;top:339.72px;font-size:21.6px;color:#e9e9e9;letter-spacing:-0.413px;">15</span>
<span class="t" style="left:710.60px;top:339.72px;font-size:21.6px;color:#e9e9e9;">0</span>
<div class="b" style="left:0px;top:388px;width:800px;height:600px;background:#2c2a2b;"></div>
<div class="key" style="left:1.40px;top:389.60px;width:110.55px;height:92.25px;background:linear-gradient(135deg,#484647 0%,#454344 50%,#434142 100%)"></div>
<span class="t" style="left:19.42px;top:417.68px;font-size:37px;color:#e8e8e8;letter-spacing:-1.807px;">AND</span>
<div class="key" style="left:114.05px;top:389.60px;width:111.90px;height:92.25px;background:linear-gradient(135deg,#484647 0%,#454344 50%,#434142 100%)"></div>
<span class="t" style="left:144.15px;top:417.68px;font-size:37px;color:#e8e8e8;letter-spacing:-3.801px;">OR</span>
<div class="key" style="left:228.05px;top:389.60px;width:111.90px;height:92.25px;background:linear-gradient(135deg,#686667 0%,#656364 50%,#626061 100%)"></div>
<span class="t" style="left:270.64px;top:417.68px;font-size:37px;color:#e8e8e8;">D</span>
<div class="key" style="left:342.05px;top:389.60px;width:111.90px;height:92.25px;background:linear-gradient(135deg,#686667 0%,#656364 50%,#626061 100%)"></div>
<span class="t" style="left:385.66px;top:417.68px;font-size:37px;color:#e8e8e8;">E</span>
<div class="key" style="left:456.05px;top:389.60px;width:111.90px;height:92.25px;background:linear-gradient(135deg,#686667 0%,#656364 50%,#626061 100%)"></div>
<span class="t" style="left:500.70px;top:417.68px;font-size:37px;color:#e8e8e8;">F</span>
<div class="key" style="left:570.05px;top:389.60px;width:111.90px;height:92.25px;background:linear-gradient(135deg,#484647 0%,#454344 50%,#434142 100%)"></div>
<span class="t" style="left:601.63px;top:417.68px;font-size:37px;color:#e8e8e8;letter-spacing:-2.650px;">AC</span>
<div class="key" style="left:684.05px;top:389.60px;width:111.95px;height:92.25px;background:linear-gradient(135deg,#484647 0%,#454344 50%,#434142 100%)"></div>
<span class="t" style="left:726.66px;top:417.68px;font-size:37px;color:#e8e8e8;">C</span>
<div class="key" style="left:1.40px;top:483.95px;width:110.55px;height:92.10px;background:linear-gradient(135deg,#484647 0%,#454344 50%,#434142 100%)"></div>
<span class="t" style="left:18.67px;top:512.03px;font-size:37px;color:#e8e8e8;letter-spacing:-3.107px;">NOR</span>
<div class="key" style="left:114.05px;top:483.95px;width:111.90px;height:92.10px;background:linear-gradient(135deg,#484647 0%,#454344 50%,#434142 100%)"></div>
<span class="t" style="left:132.84px;top:512.03px;font-size:37px;color:#e8e8e8;letter-spacing:-2.927px;">XOR</span>
<div class="key" style="left:228.05px;top:483.95px;width:111.90px;height:92.10px;background:linear-gradient(135deg,#686667 0%,#656364 50%,#626061 100%)"></div>
<span class="t" style="left:271.66px;top:512.03px;font-size:37px;color:#e8e8e8;">A</span>
<div class="key" style="left:342.05px;top:483.95px;width:111.90px;height:92.10px;background:linear-gradient(135deg,#686667 0%,#656364 50%,#626061 100%)"></div>
<span class="t" style="left:385.66px;top:512.03px;font-size:37px;color:#e8e8e8;">B</span>
<div class="key" style="left:456.05px;top:483.95px;width:111.90px;height:92.10px;background:linear-gradient(135deg,#686667 0%,#656364 50%,#626061 100%)"></div>
<span class="t" style="left:498.64px;top:512.03px;font-size:37px;color:#e8e8e8;">C</span>
<div class="key" style="left:570.05px;top:483.95px;width:111.90px;height:92.10px;background:linear-gradient(135deg,#484647 0%,#454344 50%,#434142 100%)"></div>
<span class="t" style="left:594.69px;top:512.03px;font-size:37px;color:#e8e8e8;letter-spacing:-2.626px;">RoL</span>
<div class="key" style="left:684.05px;top:483.95px;width:111.95px;height:92.10px;background:linear-gradient(135deg,#484647 0%,#454344 50%,#434142 100%)"></div>
<span class="t" style="left:706.65px;top:512.03px;font-size:37px;color:#e8e8e8;letter-spacing:-3.640px;">RoR</span>
<div class="key" style="left:1.40px;top:578.15px;width:110.55px;height:92.10px;background:linear-gradient(135deg,#484647 0%,#454344 50%,#434142 100%)"></div>
<span class="t" style="left:35.07px;top:606.23px;font-size:37px;color:#e8e8e8;">&lt;&lt;</span>
<div class="key" style="left:114.05px;top:578.15px;width:111.90px;height:92.10px;background:linear-gradient(135deg,#484647 0%,#454344 50%,#434142 100%)"></div>
<span class="t" style="left:148.39px;top:606.23px;font-size:37px;color:#e8e8e8;">&gt;&gt;</span>
<div class="key" style="left:228.05px;top:578.15px;width:111.90px;height:92.10px;background:linear-gradient(135deg,#686667 0%,#656364 50%,#626061 100%)"></div>
<span class="t" style="left:271.21px;top:601.61px;font-size:46px;color:#e8e8e8;">7</span>
<div class="key" style="left:342.05px;top:578.15px;width:111.90px;height:92.10px;background:linear-gradient(135deg,#686667 0%,#656364 50%,#626061 100%)"></div>
<span class="t" style="left:385.21px;top:601.61px;font-size:46px;color:#e8e8e8;">8</span>
<div class="key" style="left:456.05px;top:578.15px;width:111.90px;height:92.10px;background:linear-gradient(135deg,#686667 0%,#656364 50%,#626061 100%)"></div>
<span class="t" style="left:499.21px;top:601.61px;font-size:46px;color:#e8e8e8;">9</span>
<div class="key" style="left:570.05px;top:578.15px;width:111.90px;height:92.10px;background:linear-gradient(135deg,#484647 0%,#454344 50%,#434142 100%)"></div>
<span class="t" style="left:603.44px;top:606.23px;font-size:37px;color:#e8e8e8;letter-spacing:-0.514px;">2&#x27;s</span>
<div class="key" style="left:684.05px;top:578.15px;width:111.95px;height:92.10px;background:linear-gradient(135deg,#484647 0%,#454344 50%,#434142 100%)"></div>
<span class="t" style="left:719.37px;top:606.23px;font-size:37px;color:#e8e8e8;letter-spacing:-2.414px;">1&#x27;s</span>
<div class="key" style="left:1.40px;top:672.35px;width:110.55px;height:92.10px;background:linear-gradient(135deg,#484647 0%,#454344 50%,#434142 100%)"></div>
<span class="t" style="left:12.25px;top:700.43px;font-size:37px;color:#e8e8e8;letter-spacing:-1.243px;">X&lt;&lt;Y</span>
<div class="key" style="left:114.05px;top:672.35px;width:111.90px;height:92.10px;background:linear-gradient(135deg,#484647 0%,#454344 50%,#434142 100%)"></div>
<span class="t" style="left:125.62px;top:700.43px;font-size:37px;color:#e8e8e8;letter-spacing:-1.268px;">X&gt;&gt;Y</span>
<div class="key" style="left:228.05px;top:672.35px;width:111.90px;height:92.10px;background:linear-gradient(135deg,#686667 0%,#656364 50%,#626061 100%)"></div>
<span class="t" style="left:271.21px;top:695.81px;font-size:46px;color:#e8e8e8;">4</span>
<div class="key" style="left:342.05px;top:672.35px;width:111.90px;height:92.10px;background:linear-gradient(135deg,#686667 0%,#656364 50%,#626061 100%)"></div>
<span class="t" style="left:385.21px;top:695.81px;font-size:46px;color:#e8e8e8;">5</span>
<div class="key" style="left:456.05px;top:672.35px;width:111.90px;height:92.10px;background:linear-gradient(135deg,#686667 0%,#656364 50%,#626061 100%)"></div>
<span class="t" style="left:499.21px;top:695.81px;font-size:46px;color:#e8e8e8;">6</span>
<div class="key" style="left:570.05px;top:672.35px;width:111.90px;height:92.10px;background:#f2a53e"></div>
<span class="t" style="left:612.28px;top:698.03px;font-size:50px;color:#fdecd9;">÷</span>
<div class="key" style="left:684.05px;top:672.35px;width:111.95px;height:92.10px;background:#f2a53e"></div>
<span class="t" style="left:725.43px;top:698.03px;font-size:50px;color:#fdecd9;">−</span>
<div class="key" style="left:228.05px;top:766.55px;width:111.90px;height:92.10px;background:linear-gradient(135deg,#686667 0%,#656364 50%,#626061 100%)"></div>
<span class="t" style="left:271.21px;top:790.01px;font-size:46px;color:#e8e8e8;">1</span>
<div class="key" style="left:342.05px;top:766.55px;width:111.90px;height:92.10px;background:linear-gradient(135deg,#686667 0%,#656364 50%,#626061 100%)"></div>
<span class="t" style="left:385.21px;top:790.01px;font-size:46px;color:#e8e8e8;">2</span>
<div class="key" style="left:456.05px;top:766.55px;width:111.90px;height:92.10px;background:linear-gradient(135deg,#686667 0%,#656364 50%,#626061 100%)"></div>
<span class="t" style="left:499.21px;top:790.01px;font-size:46px;color:#e8e8e8;">3</span>
<div class="key" style="left:570.05px;top:766.55px;width:111.90px;height:92.10px;background:#f2a53e"></div>
<span class="t" style="left:611.40px;top:792.22px;font-size:50px;color:#fdecd9;">×</span>
<div class="key" style="left:684.05px;top:766.55px;width:111.95px;height:92.10px;background:#f2a53e"></div>
<span class="t" style="left:725.43px;top:792.22px;font-size:50px;color:#fdecd9;">+</span>
<div class="key" style="left:228.05px;top:860.75px;width:111.90px;height:92.10px;background:linear-gradient(135deg,#686667 0%,#656364 50%,#626061 100%)"></div>
<span class="t" style="left:262.05px;top:888.83px;font-size:37px;color:#e8e8e8;letter-spacing:-1.302px;">FF</span>
<div class="key" style="left:342.05px;top:860.75px;width:111.90px;height:92.10px;background:linear-gradient(135deg,#686667 0%,#656364 50%,#626061 100%)"></div>
<span class="t" style="left:385.21px;top:884.21px;font-size:46px;color:#e8e8e8;">0</span>
<div class="key" style="left:456.05px;top:860.75px;width:111.90px;height:92.10px;background:linear-gradient(135deg,#686667 0%,#656364 50%,#626061 100%)"></div>
<span class="t" style="left:486.13px;top:884.21px;font-size:46px;color:#e8e8e8;letter-spacing:0.566px;">00</span>
<div class="key" style="left:1.40px;top:766.55px;width:224.55px;height:92.10px;background:linear-gradient(135deg,#484647 0%,#454344 50%,#434142 100%)"></div>
<span class="t cj" style="left:40.1px;top:795.6px;font-size:36.4px;color:#e8e8e8;">字节翻转</span>
<div class="key" style="left:1.40px;top:860.75px;width:224.55px;height:92.10px;background:linear-gradient(135deg,#484647 0%,#454344 50%,#434142 100%)"></div>
<span class="t cj" style="left:58.3px;top:890.2px;font-size:36.4px;color:#e8e8e8;">字翻转</span>
<div class="key" style="left:570.05px;top:860.75px;width:225.95px;height:92.10px;background:#f2a53e"></div>
<span class="t" style="left:668.43px;top:886.42px;font-size:50px;color:#fdecd9;">=</span>
</div>
</body></html>
